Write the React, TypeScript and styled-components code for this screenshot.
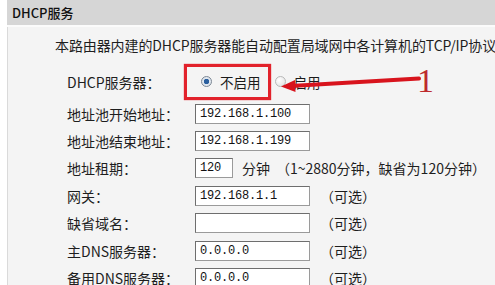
import React from 'react';
import styled, { createGlobalStyle } from 'styled-components';

const GlobalStyle = createGlobalStyle`
    html, body {
        margin: 0;
        padding: 0;
        background: #ffffff;
    }
    body {
        width: 495px;
        height: 285px;
        overflow: hidden;
        font-family: "Noto Sans CJK SC", "Liberation Sans", sans-serif;
        color: #1e1e1e;
    }
`;

const CN = `"Noto Sans CJK SC", "Liberation Sans", sans-serif`;

const Page = styled.div`
    width: 495px;
    height: 285px;
    padding-left: 7px;
    box-sizing: border-box;
    background: #ffffff;
    overflow: hidden;
`;

const TitleBar = styled.div`
    height: 25px;
    background: #d6d6d6;
    display: flex;
    align-items: center;
    padding-left: 5px;
    font-family: ${CN};
    font-size: 13px;
    font-weight: 500;
    color: #111;
    border-bottom: 2px solid #fbfbfb;
`;

const Panel = styled.div`
    position: relative;
    background: #f4f4f4;
    border-left: 1px solid #dadada;
    height: 260px;
`;

const Intro = styled.div`
    padding: 9px 0 0 47px;
    height: 27px;
    font-size: 14px;
    line-height: 18px;
    white-space: nowrap;
    letter-spacing: -0.1px;
`;

const Form = styled.div`
    display: flex;
    flex-direction: column;
    padding-left: 59px;
`;

const Row = styled.div<{ $tall?: boolean }>`
    position: relative;
    display: grid;
    grid-template-columns: 128px 1fr;
    align-items: center;
    height: ${p => (p.$tall ? '37px' : '27.4px')};
`;

const Label = styled.div`
    font-size: 14px;
    white-space: nowrap;
`;

const Field = styled.div`
    display: flex;
    align-items: center;
    font-size: 14px;
    white-space: nowrap;
`;

const TextBox = styled.div<{ $w?: number }>`
    width: ${p => p.$w ?? 115}px;
    height: 20px;
    box-sizing: border-box;
    background: #ffffff;
    border: 1px solid #6e6e6e;
    border-right-color: #9a9a9a;
    border-bottom-color: #9a9a9a;
    padding-left: 4px;
    display: flex;
    align-items: center;
    font-family: "Liberation Mono", monospace;
    font-size: 12px;
    letter-spacing: -0.2px;
    color: #111;
`;

const Hint = styled.span<{ $gap?: number }>`
    margin-left: ${p => p.$gap ?? 10}px;
    font-size: 14px;
`;

const RadioOption = styled.label<{ $marked?: boolean }>`
    position: relative;
    display: inline-flex;
    align-items: center;
    gap: 8px;
    margin-left: ${p => (p.$marked ? '6px' : '14px')};
    font-size: 13.5px;
    color: #1a1a1a;
    ${p =>
        p.$marked &&
        `
        &::after {
            content: '';
            position: absolute;
            left: -17px;
            top: 50%;
            margin-top: -18px;
            width: 87px;
            height: 36px;
            border: 3px solid #e2222b;
            box-sizing: border-box;
            box-shadow: 0 0 1px #e2222b;
        }
    `}
`;

const RadioDot = styled.span<{ $checked?: boolean }>`
    width: 11px;
    height: 11px;
    border-radius: 50%;
    box-sizing: border-box;
    border: 1px solid ${p => (p.$checked ? '#7c8794' : '#b8b8b8')};
    background: ${p =>
        p.$checked
            ? 'radial-gradient(circle, #2a5f9e 0 2.5px, #dfe6ee 3px)'
            : 'radial-gradient(circle at 35% 35%, #ffffff, #dedede)'};
`;

const Callout = styled.svg`
    position: absolute;
    left: 212px;
    top: 4px;
    overflow: visible;
    pointer-events: none;
`;

const CalloutNumber = styled.span`
    position: absolute;
    left: 350px;
    top: 1px;
    font-family: "Liberation Serif", "DejaVu Serif", serif;
    font-size: 34px;
    line-height: 34px;
    color: #bd2a2c;
`;

const optionalFields = [
    { label: '网关：', value: '192.168.1.1' },
    { label: '缺省域名：', value: '' },
    { label: '主DNS服务器：', value: '0.0.0.0' },
    { label: '备用DNS服务器：', value: '0.0.0.0' },
];

export default function App() {
    return (
        <>
            <GlobalStyle />
            <Page>
                <TitleBar>DHCP服务</TitleBar>
                <Panel>
                    <Intro>本路由器内建的DHCP服务器能自动配置局域网中各计算机的TCP/IP协议</Intro>
                    <Form>
                        <Row $tall>
                            <Label>DHCP服务器：</Label>
                            <Field>
                                <RadioOption $marked>
                                    <RadioDot $checked />
                                    不启用
                                </RadioOption>
                                <RadioOption>
                                    <RadioDot />
                                    启用
                                </RadioOption>
                            </Field>
                            {/* red annotation arrow */}
                            <Callout width="150" height="30" viewBox="0 0 150 30">
                                <path d="M140 11.5 L12 19" stroke="#d8141d" strokeWidth="4" strokeLinecap="round" />
                                <path d="M2 19.5 L16 13 L16.5 25 Z" fill="#d8141d" />
                            </Callout>
                            <CalloutNumber>1</CalloutNumber>
                        </Row>
                        <Row>
                            <Label>地址池开始地址：</Label>
                            <Field>
                                <TextBox>192.168.1.100</TextBox>
                            </Field>
                        </Row>
                        <Row>
                            <Label>地址池结束地址：</Label>
                            <Field>
                                <TextBox>192.168.1.199</TextBox>
                            </Field>
                        </Row>
                        <Row>
                            <Label>地址租期：</Label>
                            <Field>
                                <TextBox $w={38}>120</TextBox>
                                <Hint $gap={9}>分钟</Hint>
                                <Hint $gap={6}>（1~2880分钟，缺省为120分钟）</Hint>
                            </Field>
                        </Row>
                        {optionalFields.map(f => (
                            <Row key={f.label}>
                                <Label>{f.label}</Label>
                                <Field>
                                    <TextBox>{f.value}</TextBox>
                                    <Hint>（可选）</Hint>
                                </Field>
                            </Row>
                        ))}
                    </Form>
                </Panel>
            </Page>
        </>
    );
}
